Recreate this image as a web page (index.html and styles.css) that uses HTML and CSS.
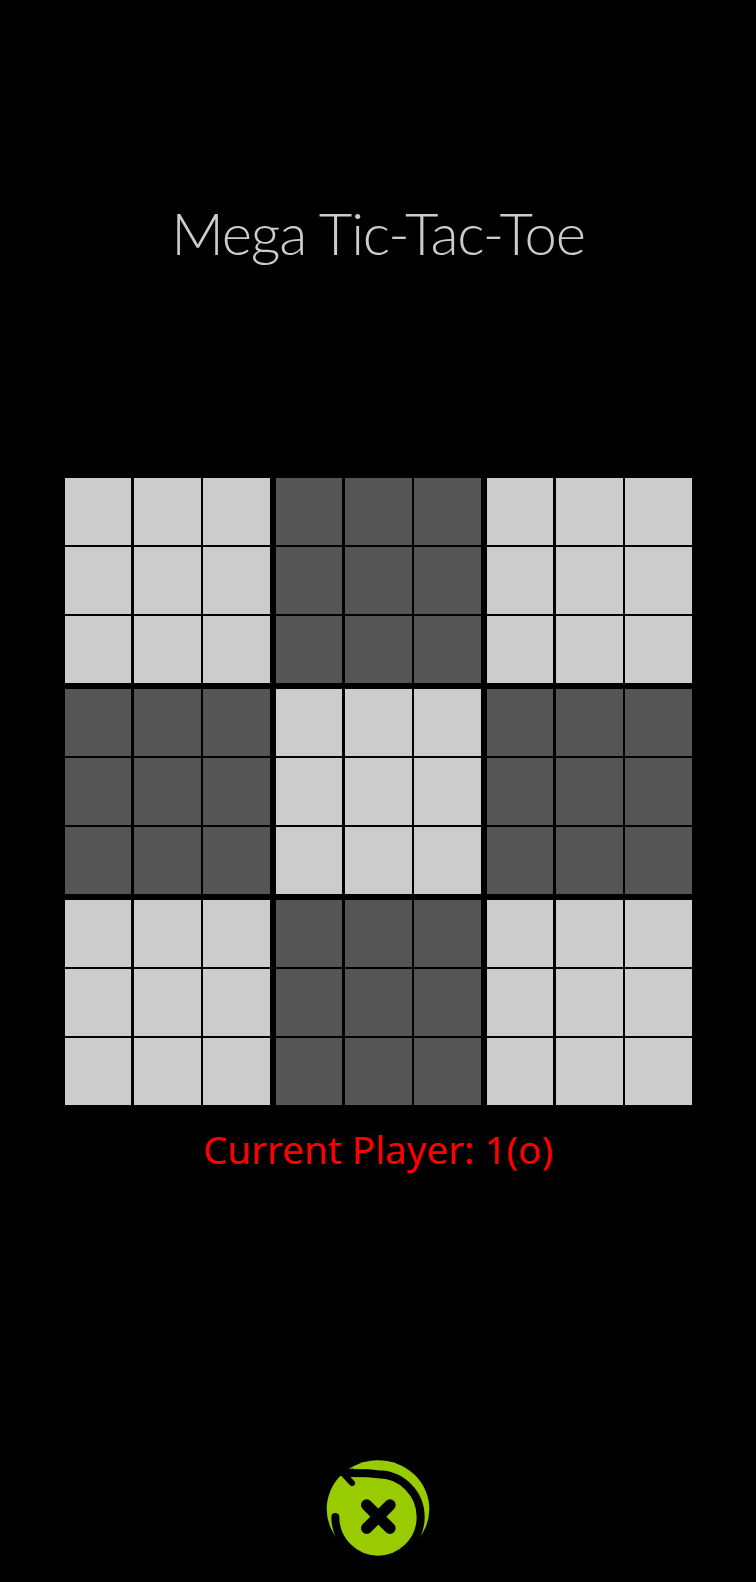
FILE: index.html
```html
<!DOCTYPE html>
<html lang="en">
<head>
<meta charset="utf-8">
<title>Mega Tic-Tac-Toe</title>
<link rel="stylesheet" href="styles.css">
</head>
<body>
<main class="app">
  <h1 class="title">Mega Tic-Tac-Toe</h1>
  <div class="board">
    <div class="block light"><i></i><i></i><i></i><i></i><i></i><i></i><i></i><i></i><i></i></div>
    <div class="block dark"><i></i><i></i><i></i><i></i><i></i><i></i><i></i><i></i><i></i></div>
    <div class="block light"><i></i><i></i><i></i><i></i><i></i><i></i><i></i><i></i><i></i></div>
    <div class="block dark"><i></i><i></i><i></i><i></i><i></i><i></i><i></i><i></i><i></i></div>
    <div class="block light"><i></i><i></i><i></i><i></i><i></i><i></i><i></i><i></i><i></i></div>
    <div class="block dark"><i></i><i></i><i></i><i></i><i></i><i></i><i></i><i></i><i></i></div>
    <div class="block light"><i></i><i></i><i></i><i></i><i></i><i></i><i></i><i></i><i></i></div>
    <div class="block dark"><i></i><i></i><i></i><i></i><i></i><i></i><i></i><i></i><i></i></div>
    <div class="block light"><i></i><i></i><i></i><i></i><i></i><i></i><i></i><i></i><i></i></div>
  </div>
  <p class="status">Current Player: 1(o)</p>
  <svg class="reset" viewBox="0 0 450 456" aria-label="Reset">
    <ellipse cx="234" cy="234" rx="154" ry="146" fill="#99cc00"/>
    <path d="M106 258 A128 128 0 1 0 234 130 L205 127 L145 126" fill="none" stroke="#000" stroke-width="24" stroke-linecap="round"/>
    <path d="M120 135 L126 118 L160 112 L150 135 Z" fill="#000"/>
    <path d="M130 128 L156 156" fill="none" stroke="#000" stroke-width="18" stroke-linecap="round"/>
    <path d="M200 222 L270 292 M270 222 L200 292" fill="none" stroke="#000" stroke-width="34" stroke-linecap="round"/>
  </svg>
</main>
</body>
</html>
```

FILE: styles.css
```css
* { box-sizing: border-box; }
html, body { margin: 0; padding: 0; background: #000; }
.app {
  width: 756px;
  height: 1582px;
  display: flex;
  flex-direction: column;
  align-items: center;
  overflow: hidden;
}
.title {
  margin: 194px 0 0;
  height: 78px;
  line-height: 78px;
  font-family: "Lato", sans-serif;
  font-weight: 300;
  font-size: 58px;
  letter-spacing: -1.2px;
  color: #cccccc;
  white-space: nowrap;
}
.board {
  margin: 206px 0 0 0.6px;
  width: 627.4px;
  display: grid;
  grid-template-columns: repeat(3, 205.4px);
  column-gap: 5.6px;
  row-gap: 6px;
}
.block {
  display: grid;
  grid-template-columns: repeat(3, 66.6px);
  grid-auto-rows: 66.6px;
  column-gap: 2.8px;
  row-gap: 2.6px;
}
.light i { background: #cccccc; }
.dark i { background: #555555; }
.status {
  margin: 18px 0 0;
  line-height: 52px;
  font-family: "Noto Sans", sans-serif;
  font-weight: 400;
  font-size: 38.6px;
  color: #ff0000;
}
.reset {
  margin: 256px 7px 0 0;
  width: 150px;
  height: 152px;
  flex: none;
}
```
